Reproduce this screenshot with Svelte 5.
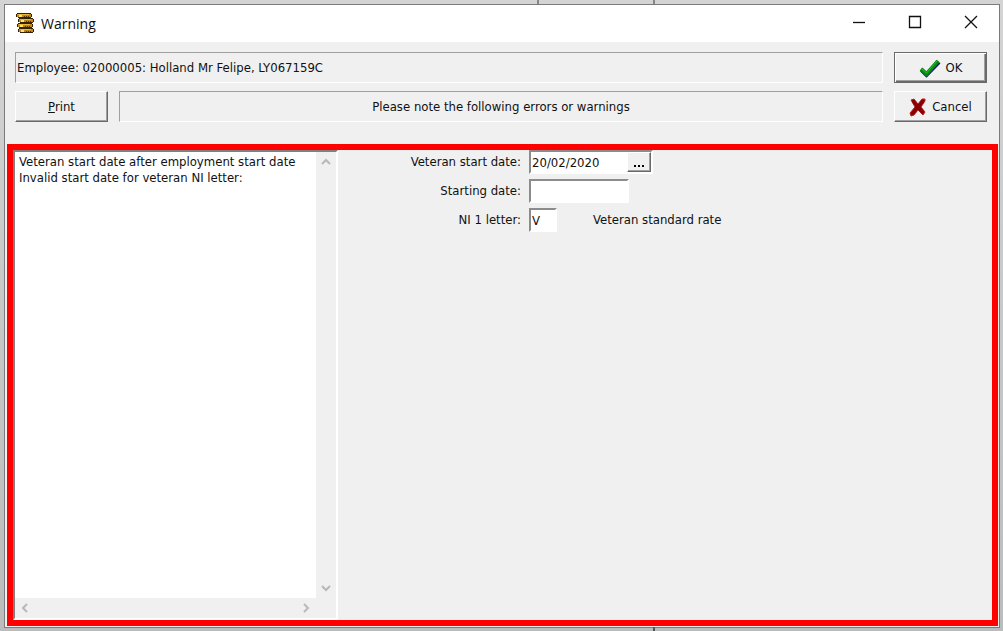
<script lang="ts">
  let messages = $state(
    'Veteran start date after employment start date\nInvalid start date for veteran NI letter:'
  );
  let veteranDate = $state('20/02/2020');
  let startingDate = $state('');
  let niLetter = $state('V');

  const employee = 'Employee: 02000005: Holland Mr Felipe, LY067159C';
  const coins = [
    { x: 0, y: 0 },
    { x: 2, y: 5 },
    { x: 1, y: 10 },
    { x: 2, y: 15 }
  ];
</script>

<div class="desktop">
  <div class="mark first"></div>
  <div class="mark second"></div>
  <div class="mark third"></div>

  <main class="window">
    <header class="titlebar">
      <svg class="app-icon" width="18" height="20" viewBox="0 0 18 20" aria-hidden="true">
        {#each coins as coin}
          <g transform="translate({coin.x} {coin.y})">
            <path d="M0 1h1v-1h14v1h1v3h-1v1h-13v-1h-2z" fill="#33220a" />
            <rect x="1" y="1" width="14" height="3" fill="#c08a10" />
            <rect x="2" y="1" width="11" height="1" fill="#e8b83a" />
            <rect x="3" y="2" width="3" height="2" fill="#ffe070" />
            <path d="M8.5 3v1M10.5 3v1M12.5 3v1" stroke="#4d350a" />
          </g>
        {/each}
      </svg>
      <h1>Warning</h1>
      <div class="window-controls">
        <button aria-label="Minimize">
          <svg width="14" height="14" viewBox="0 0 14 14"><path d="M1 7.5h12" /></svg>
        </button>
        <button aria-label="Maximize">
          <svg width="14" height="14" viewBox="0 0 14 14"><path d="M1.5 1.5h11v11h-11z" /></svg>
        </button>
        <button aria-label="Close">
          <svg width="14" height="14" viewBox="0 0 14 14"><path d="M1 1l12 12M13 1L1 13" /></svg>
        </button>
      </div>
    </header>

    <section class="toolbar">
      <div class="row">
        <div class="sunken employee">{employee}</div>
        <button class="btn default">
          <svg width="22" height="20" viewBox="0 0 22 20" aria-hidden="true">
            <path d="M2.5 12L7.5 17L20 4" fill="none" stroke="#16166e" stroke-width="4" />
            <path d="M2 11L7.5 16L19 3" fill="none" stroke="#0a8a12" stroke-width="4" />
            <path d="M2 10L7.5 15L18 3" fill="none" stroke="#20c52a" stroke-width="1" />
          </svg>
          OK
        </button>
      </div>
      <div class="row">
        <button class="btn"><span><u>P</u>rint</span></button>
        <div class="sunken notice">Please note the following errors or warnings</div>
        <button class="btn">
          <svg width="18" height="20" viewBox="0 0 18 20" aria-hidden="true">
            <path
              d="M2 3L5 2L9 7L13 2H16V4L12 10L16 15L14 18L9 13L5 18L2 19L1 16L6 10Z"
              fill="#8a0000"
              stroke="#b32628"
              stroke-width="1"
            />
            <path d="M4 4L14 16M14 4L4 16" stroke="#8a0000" stroke-width="3" />
          </svg>
          Cancel
        </button>
      </div>
    </section>

    <section class="details">
      <div class="messages">
        <textarea aria-label="Messages" wrap="off" readonly bind:value={messages}></textarea>
        <div class="scroll vertical">
          <svg width="12" height="12" viewBox="0 0 12 12"><path d="M2 8l4-4 4 4" /></svg>
          <svg width="12" height="12" viewBox="0 0 12 12"><path d="M2 4l4 4 4-4" /></svg>
        </div>
        <div class="scroll horizontal">
          <svg width="12" height="12" viewBox="0 0 12 12"><path d="M8 2L4 6l4 4" /></svg>
          <svg width="12" height="12" viewBox="0 0 12 12"><path d="M4 2l4 4-4 4" /></svg>
        </div>
      </div>

      <form class="fields" onsubmit={(e) => e.preventDefault()}>
        <label for="veteran-date">Veteran start date:</label>
        <div class="date-field">
          <input id="veteran-date" type="text" bind:value={veteranDate} />
          <button type="button" aria-label="Choose date">
            <svg width="12" height="4" viewBox="0 0 12 4" aria-hidden="true">
              <path d="M1 1h2v2h-2zM5 1h2v2h-2zM9 1h2v2h-2z" />
            </svg>
          </button>
        </div>

        <label for="starting-date">Starting date:</label>
        <input id="starting-date" class="box" type="text" bind:value={startingDate} />

        <label for="ni-letter">NI 1 letter:</label>
        <div class="letter-field">
          <input id="ni-letter" class="box letter" type="text" maxlength="1" bind:value={niLetter} />
          <span>Veteran standard rate</span>
        </div>
      </form>
    </section>
  </main>
</div>

<style>
  :global(body) {
    background: #cfcfcf;
  }

  .desktop {
    position: relative;
    display: flex;
    box-sizing: border-box;
    min-height: 100vh;
    padding: 4px 3px 3px 4px;
    background: linear-gradient(#d4d4d4, #bcbcbc);
    color: #111;
    font: 13px/16px 'DejaVu Sans Condensed', 'DejaVu Sans', sans-serif;
  }

  /* Edges of the windows behind this one */
  .mark {
    position: absolute;
    width: 2px;
    height: 4px;
    background: #888;
  }

  .mark.first {
    top: 0;
    left: 537px;
  }

  .mark.second {
    top: 0;
    left: 653px;
  }

  .mark.third {
    bottom: 0;
    left: 653px;
    background: #555;
  }

  .window {
    display: flex;
    flex: 1;
    flex-direction: column;
    min-width: 0;
    border: 1px solid #7b7b7b;
    background: #f0f0f0;
  }

  .titlebar {
    display: flex;
    align-items: center;
    height: 37px;
    padding-left: 11px;
    background: #fff;
  }

  .app-icon {
    margin-bottom: 2px;
  }

  h1 {
    flex: 1;
    margin: 0 0 0 7px;
    font: 14px/20px 'Open Sans', 'Noto Sans', sans-serif;
  }

  button {
    color: inherit;
    font: inherit;
  }

  .window-controls {
    display: flex;
    align-self: start;
  }

  .window-controls button {
    display: flex;
    align-items: center;
    justify-content: center;
    width: 56px;
    height: 34px;
    padding: 0;
    border: none;
    background: none;
  }

  .window-controls path {
    fill: none;
    stroke: #111;
    stroke-width: 1.3;
  }

  .toolbar {
    display: flex;
    flex-direction: column;
    gap: 8px;
    padding: 10px 12px 22px 10px;
  }

  .row {
    display: flex;
    gap: 11px;
  }

  .sunken {
    display: flex;
    flex: 1;
    align-items: center;
    box-sizing: border-box;
    height: 31px;
    padding: 0 1px;
    border: 1px solid;
    border-color: #a0a0a0 #fff #fff #a0a0a0;
  }

  .notice {
    justify-content: center;
  }

  .btn {
    display: flex;
    align-items: center;
    justify-content: center;
    gap: 5px;
    box-sizing: border-box;
    width: 93px;
    height: 31px;
    padding: 0;
    border: 1px solid;
    border-color: #fff #696969 #696969 #fff;
    background: #f0f0f0;
    box-shadow: inset -1px -1px #a0a0a0;
  }

  .btn.default {
    border-color: #696969;
    box-shadow:
      inset 1px 1px #fff,
      inset -1px -1px #696969,
      inset -2px -2px #a0a0a0;
  }

  .details {
    display: flex;
    flex: 1;
    margin: 0 1px 1px 2px;
    border: 6px solid #f00;
  }

  .messages {
    display: grid;
    grid-template-columns: 1fr 20px;
    grid-template-rows: 1fr 20px;
    box-sizing: border-box;
    width: 33.2%;
    border: 2px solid;
    border-color: #808080 #fff #fff #808080;
  }

  textarea {
    box-sizing: border-box;
    width: 100%;
    height: 100%;
    padding: 2px 4px;
    border: none;
    outline: none;
    overflow: hidden;
    resize: none;
    background: #fff;
    color: inherit;
    font: inherit;
  }

  .scroll {
    display: flex;
    align-items: center;
    justify-content: space-between;
  }

  .scroll path {
    fill: none;
    stroke: #b8b8b8;
    stroke-width: 2;
  }

  .vertical {
    flex-direction: column;
    padding: 4px 0;
  }

  .horizontal {
    padding: 0 4px;
  }

  .fields {
    display: grid;
    flex: 1;
    grid-template-columns: 183px 1fr;
    grid-auto-rows: 24px;
    align-content: start;
    align-items: center;
    justify-items: start;
    column-gap: 8px;
    row-gap: 5px;
  }

  label {
    justify-self: end;
  }

  input {
    box-sizing: border-box;
    min-width: 0;
    height: 24px;
    padding: 0 1px;
    border: none;
    outline: none;
    background: #fff;
    color: inherit;
    font: inherit;
  }

  .box,
  .date-field {
    box-sizing: border-box;
    width: 100px;
    height: 24px;
    border: 2px solid;
    border-color: #8c8c8c #fff #fff #8c8c8c;
  }

  .date-field {
    display: flex;
    width: 124px;
  }

  .date-field input {
    flex: 1;
    height: 20px;
  }

  .date-field button {
    display: flex;
    align-items: end;
    justify-content: center;
    box-sizing: border-box;
    width: 24px;
    height: 20px;
    padding: 0 0 3px;
    border: 1px solid;
    border-color: #fff #696969 #696969 #fff;
    background: #f0f0f0;
    box-shadow: inset -1px -1px #a0a0a0;
  }

  .letter-field {
    display: flex;
    align-items: center;
    gap: 36px;
  }

  .letter {
    width: 28px;
  }
</style>
